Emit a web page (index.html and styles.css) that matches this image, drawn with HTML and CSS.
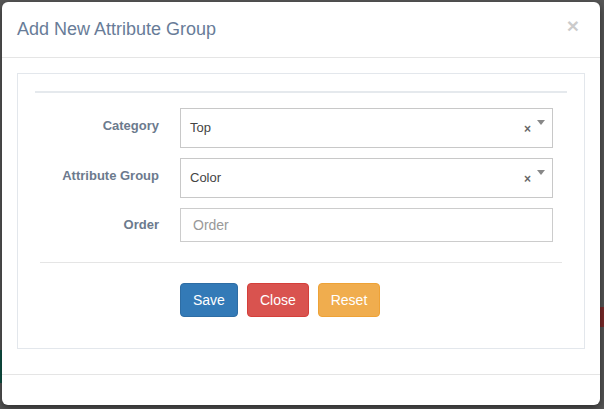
FILE: index.html
```html
<!DOCTYPE html>
<html lang="en">
<head>
<meta charset="utf-8">
<title>Add New Attribute Group</title>
<link rel="stylesheet" href="styles.css">
</head>
<body>
<div class="page-bit page-bit-green"></div>
<div class="page-bit page-bit-red"></div>
<div class="modal">
  <div class="modal-header">
    <h4 class="modal-title">Add New Attribute Group</h4>
    <button class="close" type="button">×</button>
  </div>
  <div class="modal-body">
    <div class="panel">
      <div class="panel-rule"></div>
      <form class="form-grid">
        <label class="control-label">Category</label>
        <div class="select2 select2-tall">
          <span class="select2-text">Top</span>
          <span class="select2-clear">×</span>
          <span class="select2-arrow"></span>
        </div>
        <label class="control-label">Attribute Group</label>
        <div class="select2 select2-tall">
          <span class="select2-text">Color</span>
          <span class="select2-clear">×</span>
          <span class="select2-arrow"></span>
        </div>
        <label class="control-label control-label-input">Order</label>
        <input class="form-control" type="text" placeholder="Order">
      </form>
      <div class="form-sep"></div>
      <div class="btn-row">
        <button class="btn btn-primary" type="button">Save</button>
        <button class="btn btn-danger" type="button">Close</button>
        <button class="btn btn-warning" type="button">Reset</button>
      </div>
    </div>
  </div>
  <div class="modal-footer"></div>
</div>
</body>
</html>
```
FILE: styles.css
```css
* { box-sizing: border-box; }

html, body {
  margin: 0;
  padding: 0;
}

body {
  width: 604px;
  height: 409px;
  overflow: hidden;
  background: #575757;
  font-family: "Liberation Sans", Arial, Helvetica, sans-serif;
  font-size: 14px;
  line-height: 20px;
  color: #333;
  position: relative;
}

.page-bit {
  position: absolute;
  z-index: 0;
}

.page-bit-green {
  left: 0;
  top: 350px;
  width: 2px;
  height: 33px;
  background: #0f5546;
}

.page-bit-red {
  left: 600px;
  top: 307px;
  width: 4px;
  height: 20px;
  background: #7d2a2a;
}

.modal {
  position: relative;
  z-index: 1;
  margin: 2px 0 0 2px;
  width: 598px;
  height: 403px;
  background: #fff;
  border-radius: 6px;
  box-shadow: 0 3px 9px rgba(0, 0, 0, 0.5);
  display: flex;
  flex-direction: column;
}

.modal-header {
  display: flex;
  align-items: flex-start;
  justify-content: space-between;
  padding: 15px;
  border-bottom: 1px solid #e5e5e5;
}

.modal-title {
  margin: 0;
  font-size: 18px;
  line-height: 25px;
  font-weight: normal;
  color: #687c98;
}

.close {
  margin: -2px 6px 0 0;
  padding: 0;
  border: 0;
  background: transparent;
  font-family: "Liberation Sans", Arial, sans-serif;
  font-size: 21px;
  font-weight: bold;
  line-height: 21px;
  color: #000;
  opacity: 0.2;
}

.modal-body {
  padding: 15px 15px 25px 15px;
}

.panel {
  height: 276px;
  border: 1px solid #e3e7ec;
  padding: 17px 17px 0 17px;
}

.panel-rule {
  height: 2px;
  background: #e5e9ed;
}

.form-grid {
  margin: 15px 0 0 0;
  display: grid;
  grid-template-columns: 124px 373px;
  column-gap: 21px;
  row-gap: 10px;
}

.control-label {
  text-align: right;
  font-size: 13px;
  font-weight: bold;
  line-height: 20px;
  padding-top: 8px;
  color: #6c7a8d;
}

.control-label-input {
  padding-top: 7px;
}

.select2 {
  height: 40px;
  border: 1px solid #c8c8c8;
  background: #fff;
  display: flex;
  align-items: center;
  padding-left: 9px;
}

.select2-text {
  flex: 1;
  font-size: 13px;
  color: #444;
}

.select2-clear {
  font-size: 12px;
  font-weight: bold;
  color: #666;
  line-height: 12px;
  margin-right: 6px;
  padding-top: 2px;
}

.select2-arrow {
  align-self: flex-start;
  margin-top: 11px;
  margin-right: 7px;
  width: 0;
  height: 0;
  border-style: solid;
  border-width: 5px 4px 0 4px;
  border-color: #888 transparent transparent transparent;
}

.form-control {
  height: 34px;
  width: 373px;
  margin: 0;
  border: 1px solid #ccc;
  border-radius: 0;
  padding: 6px 12px;
  font-family: "Liberation Sans", Arial, sans-serif;
  font-size: 14px;
  color: #555;
  outline: none;
}

.form-control::placeholder {
  color: #999;
}

.form-sep {
  margin: 20px 5px 0 5px;
  height: 1px;
  background: #e5e5e5;
}

.btn-row {
  display: flex;
  gap: 9px;
  margin: 20px 0 0 145px;
}

.btn {
  height: 34px;
  padding: 6px 12px;
  border: 1px solid transparent;
  border-radius: 4px;
  font-family: "Liberation Sans", Arial, sans-serif;
  font-size: 14px;
  line-height: 20px;
  color: #fff;
}

.btn-primary {
  background: #337ab7;
  border-color: #2e6da4;
}

.btn-danger {
  background: #d9534f;
  border-color: #d43f3a;
}

.btn-warning {
  background: #f0ad4e;
  border-color: #eea236;
}

.modal-footer {
  border-top: 1px solid #e5e5e5;
  flex: 1;
}
```
